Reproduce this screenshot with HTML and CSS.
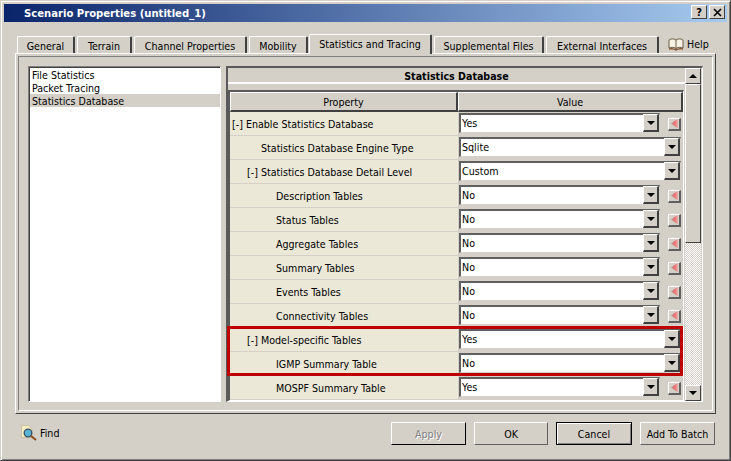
FILE: index.html
```html
<!DOCTYPE html>
<html>
	<head>
		<meta charset="UTF-8">
		<title>Scenario Properties</title>
		<link rel="stylesheet" href="styles.css">
	</head>
	<body>
		<div class="window">
			<div class="titlebar">
				<span class="title">Scenario Properties (untitled_1)</span>
				<span class="capbtn">?</span>
				<span class="capbtn">
					<svg width="9" height="9" viewBox="0 0 9 9"><path d="M1 1L8 8M8 1L1 8" stroke="#000" stroke-width="1.6"/></svg>
				</span>
			</div>
			<div class="tabs">
				<span class="tab tab-general">General</span>
				<span class="tab tab-terrain">Terrain</span>
				<span class="tab tab-channel">Channel Properties</span>
				<span class="tab tab-mobility">Mobility</span>
				<span class="tab tab-stats active">Statistics and Tracing</span>
				<span class="tab tab-files">Supplemental Files</span>
				<span class="tab tab-ext">External Interfaces</span>
				<span class="help">
					<svg width="16" height="14" viewBox="0 0 16 14">
						<path d="M1 3C3 1.500 6 1.500 8 3C10 1.500 13 1.500 15 3V11C13 10 10 10 8 11.500C6 10 3 10 1 11Z" fill="#f7f3e4" stroke="#6b5a44"/>
						<path d="M8 3V11.500" stroke="#6b5a44"/>
						<path d="M1 12C3 11.500 6 11.500 8 13C10 11.500 13 11.500 15 12" fill="none" stroke="#8a5a3a" stroke-width="1.500"/>
					</svg>
					Help
				</span>
			</div>
			<div class="panel">
				<div class="panel-inner">
					<ul class="list">
						<li>File Statistics</li>
						<li>Packet Tracing</li>
						<li class="selected">Statistics Database</li>
					</ul>
					<div class="grid">
						<div class="grid-main">
							<div class="grid-title">Statistics Database</div>
							<div class="table">
								<div class="grid-head">
									<span class="head-prop">Property</span>
									<span class="head-val">Value</span>
								</div>
								<div class="rows">
									<div class="row">
										<span class="name lv0">[-] Enable Statistics Database</span>
										<span class="select">Yes<i class="drop"></i></span><i class="revert"></i>
									</div>
									<div class="row">
										<span class="name lv2">Statistics Database Engine Type</span>
										<span class="select wide">Sqlite<i class="drop"></i></span>
									</div>
									<div class="row">
										<span class="name lv1">[-] Statistics Database Detail Level</span>
										<span class="select wide">Custom<i class="drop"></i></span>
									</div>
									<div class="row">
										<span class="name lv3">Description Tables</span>
										<span class="select">No<i class="drop"></i></span><i class="revert"></i>
									</div>
									<div class="row">
										<span class="name lv3">Status Tables</span>
										<span class="select">No<i class="drop"></i></span><i class="revert"></i>
									</div>
									<div class="row">
										<span class="name lv3">Aggregate Tables</span>
										<span class="select">No<i class="drop"></i></span><i class="revert"></i>
									</div>
									<div class="row">
										<span class="name lv3">Summary Tables</span>
										<span class="select">No<i class="drop"></i></span><i class="revert"></i>
									</div>
									<div class="row">
										<span class="name lv3">Events Tables</span>
										<span class="select">No<i class="drop"></i></span><i class="revert"></i>
									</div>
									<div class="row">
										<span class="name lv3">Connectivity Tables</span>
										<span class="select">No<i class="drop"></i></span><i class="revert"></i>
									</div>
									<div class="row">
										<span class="name lv1">[-] Model-specific Tables</span>
										<span class="select wide">Yes<i class="drop"></i></span>
									</div>
									<div class="row">
										<span class="name lv3">IGMP Summary Table</span>
										<span class="select wide">No<i class="drop"></i></span>
									</div>
									<div class="row">
										<span class="name lv3">MOSPF Summary Table</span>
										<span class="select">Yes<i class="drop"></i></span><i class="revert"></i>
									</div>
								</div>
								<div class="highlight"></div>
							</div>
						</div>
						<div class="scrollbar">
							<span class="sb-btn"><i class="arrow-up"></i></span>
							<span class="sb-thumb"></span>
							<span class="sb-track"></span>
							<span class="sb-btn"><i class="arrow-down"></i></span>
						</div>
					</div>
				</div>
			</div>
			<div class="footer">
				<span class="find">
					<svg width="17" height="17" viewBox="0 0 17 17">
						<path d="M1.500 1.500H8.500L12 5V13.500H1.500Z" fill="#f4eec0" stroke="#c8c0a0"/>
						<circle cx="8" cy="9" r="3.800" fill="#58b4d0" stroke="#35506a" stroke-width="1.300"/>
						<path d="M11 12L16 16" stroke="#8a4a1a" stroke-width="2"/>
					</svg>
					Find
				</span>
				<span class="btn btn-apply disabled">Apply</span>
				<span class="btn btn-ok">OK</span>
				<span class="btn btn-cancel">Cancel</span>
				<span class="btn btn-batch">Add To Batch</span>
			</div>
		</div>
	</body>
</html>
```

FILE: styles.css
```css
html, body {
	margin: 0;
	padding: 0;
}
body {
	width: 731px;
	height: 461px;
	overflow: hidden;
	background: #d4d0c8;
	color: #000;
	font-family: "DejaVu Sans Condensed", "DejaVu Sans", sans-serif;
	font-size: 10.6px;
}
.window {
	box-sizing: border-box;
	width: 731px;
	height: 461px;
	display: flex;
	flex-direction: column;
	padding: 3px;
	border: 1px solid #404040;
	border-top-color: #d4d0c8;
	border-left-color: #d4d0c8;
	box-shadow: inset 1px 1px 0 #fff, inset -1px -1px 0 #808080;
}
.titlebar {
	height: 18px;
	flex-shrink: 0;
	display: flex;
	gap: 2px;
	padding: 1px 2px 0 0;
	box-sizing: border-box;
	background: linear-gradient(to right, #0a246a, #a6caf0);
}
.title {
	flex: 1;
	padding-left: 20px;
	color: #fff;
	font-weight: bold;
	font-size: 11.2px;
	line-height: 18px;
}
.capbtn {
	box-sizing: border-box;
	width: 16px;
	height: 14px;
	display: flex;
	align-items: center;
	justify-content: center;
	background: #d4d0c8;
	border: 1px solid #404040;
	border-top-color: #fff;
	border-left-color: #fff;
	font-weight: bold;
	font-size: 11px;
}
.tabs {
	height: 31px;
	flex-shrink: 0;
	display: flex;
	align-items: flex-end;
	padding-left: 13px;
}
.tab {
	box-sizing: border-box;
	height: 17px;
	margin-right: 2px;
	padding-top: 1px;
	display: flex;
	align-items: center;
	justify-content: center;
	border: 1px solid #404040;
	border-top-color: #fff;
	border-left-color: #fff;
	border-bottom: 0;
	border-right-width: 2px;
	border-radius: 2px 2px 0 0;
}
.tab.active {
	position: relative;
	z-index: 1;
	height: 20px;
	margin-bottom: -1px;
	padding-top: 0;
	padding-bottom: 1px;
	background: #d4d0c8;
}
.tab-general { width: 58px; }
.tab-terrain { width: 55px; }
.tab-channel { width: 113px; }
.tab-mobility { width: 59px; margin-right: 1px; }
.tab-stats { width: 123px; }
.tab-files { width: 110px; }
.tab-ext { width: 113px; }
.help {
	display: flex;
	align-items: center;
	gap: 3px;
	margin-left: 7px;
	margin-bottom: 2px;
}
.panel {
	box-sizing: border-box;
	margin-left: 11px;
	margin-right: 11px;
	height: 361px;
	flex-shrink: 0;
	padding: 2px;
	border: 1px solid #404040;
	border-top-color: #fff;
	border-left-color: #fff;
}
.panel-inner {
	box-sizing: border-box;
	height: 100%;
	display: flex;
	gap: 5px;
	padding: 9px 9px 8px 9px;
	border: 1px solid #fff;
	border-top-color: #808080;
	border-left-color: #808080;
}
.list {
	box-sizing: border-box;
	width: 193px;
	margin: 0;
	padding: 0;
	list-style: none;
	background: #fff;
	border: 1px solid #fff;
	border-top-color: #808080;
	border-left-color: #808080;
	box-shadow: inset 1px 1px 0 #404040;
}
.list li {
	height: 13px;
	line-height: 15px;
	margin-left: 1px;
	padding-left: 2px;
}
.list li:first-child {
	margin-top: 1px;
}
.list li.selected {
	background: #d4d0c8;
}
.grid {
	flex: 1;
	display: flex;
	min-width: 0;
	padding-right: 1px;
	border-top: 2px solid #5a5a5a;
	border-left: 2px solid #5a5a5a;
	border-right: 1px solid #fff;
	border-bottom: 1px solid #fff;
}
.grid-main {
	flex: 1;
	min-width: 0;
	display: flex;
	flex-direction: column;
}
.grid-title {
	height: 14px;
	flex-shrink: 0;
	line-height: 17px;
	text-align: center;
	font-weight: bold;
	border-bottom: 2px solid #fff;
}
.table {
	position: relative;
	flex: 1;
	min-height: 0;
	margin-top: 6px;
	margin-right: 1px;
	border-top: 2px solid #5a5a5a;
	border-left: 2px solid #5a5a5a;
	border-right: 1px solid #fff;
	border-bottom: 1px solid #fff;
}
.grid-head {
	display: flex;
	height: 20px;
}
.grid-head span {
	box-sizing: border-box;
	display: flex;
	align-items: center;
	justify-content: center;
	height: 20px;
	border: 1px solid #404040;
	border-top-color: #fff;
	border-left-color: #fff;
	border-bottom-width: 2px;
	border-right-width: 2px;
}
.head-prop { width: 228px; }
.head-val { flex: 1; }
.row {
	display: flex;
	align-items: center;
	height: 24px;
}
.name {
	box-sizing: border-box;
	width: 228px;
	height: 24px;
	line-height: 25px;
	flex-shrink: 0;
	background: #ebe8d8;
	border-bottom: 1px solid #d4d0c8;
}
.lv0 { padding-left: 2px; }
.lv1 { padding-left: 17px; }
.lv2 { padding-left: 31px; }
.lv3 { padding-left: 46px; }
.select {
	box-sizing: border-box;
	position: relative;
	align-self: flex-start;
	width: 201px;
	height: 20px;
	margin-top: 1px;
	margin-left: 1px;
	line-height: 17px;
	padding-left: 1px;
	background: #fff;
	border: 1px solid #d4d0c8;
	border-top: 2px solid #606060;
	border-left: 2px solid #606060;
}
.select.wide {
	width: 222px;
}
.drop {
	box-sizing: border-box;
	position: absolute;
	top: -1px;
	right: 0;
	width: 16px;
	height: 18px;
	background: #d4d0c8;
	border: 2px solid #404040;
	border-top: 1px solid #fff;
	border-left: 1px solid #fff;
}
.drop::after {
	content: "";
	position: absolute;
	left: 3px;
	top: 6px;
	border-left: 4px solid transparent;
	border-right: 4px solid transparent;
	border-top: 4px solid #000;
}
.revert {
	box-sizing: border-box;
	position: relative;
	width: 13px;
	height: 13px;
	margin-left: 8px;
	background: #d4d0c8;
	border: 2px solid #606060;
	border-top: 1px solid #fff;
	border-left: 1px solid #fff;
}
.revert::after {
	content: "";
	position: absolute;
	left: 2px;
	top: 0;
	width: 7px;
	height: 10px;
	clip-path: polygon(100% 0, 100% 100%, 0 50%);
	background: linear-gradient(to right, #a89a9a, #ee6e6e 55%, #e8b4b4);
}
.highlight {
	box-sizing: border-box;
	position: absolute;
	left: -3px;
	top: 234px;
	width: 456px;
	height: 50px;
	border: 3px solid #c00000;
}
.scrollbar {
	width: 16px;
	flex-shrink: 0;
	display: flex;
	flex-direction: column;
}
.sb-btn, .sb-thumb {
	box-sizing: border-box;
	flex-shrink: 0;
	background: #d4d0c8;
	border: 1px solid #404040;
	border-top-color: #fff;
	border-left-color: #fff;
}
.sb-btn {
	height: 16px;
	display: flex;
	align-items: center;
	justify-content: center;
}
.sb-thumb {
	height: 159px;
}
.sb-track {
	flex: 1;
	background: repeating-conic-gradient(#d4d0c8 0 25%, #fff 0 50%) 0 0 / 2px 2px;
}
.arrow-up {
	border-left: 4px solid transparent;
	border-right: 4px solid transparent;
	border-bottom: 4px solid #000;
}
.arrow-down {
	border-left: 4px solid transparent;
	border-right: 4px solid transparent;
	border-top: 4px solid #000;
}
.footer {
	flex: 1;
	display: flex;
	align-items: center;
	gap: 8px;
	padding: 0 12px 4px 16px;
}
.find {
	flex: 1;
	display: flex;
	align-items: center;
	gap: 3px;
	margin-bottom: 2px;
}
.btn {
	box-sizing: border-box;
	height: 23px;
	display: flex;
	align-items: center;
	justify-content: center;
	background: #d4d0c8;
	border: 1px solid #606060;
	border-top-color: #fff;
	border-left-color: #fff;
}
.btn-apply { width: 75px; border-right-color: #000; border-bottom-color: #000; }
.btn-ok { width: 74px; }
.btn-cancel { width: 76px; border-color: #000; box-shadow: inset 1px 1px 0 #fff, inset -1px -1px 0 #808080; }
.btn-batch { width: 75px; }
.disabled { color: #808080; text-shadow: 1px 1px 0 #fff; }
```
